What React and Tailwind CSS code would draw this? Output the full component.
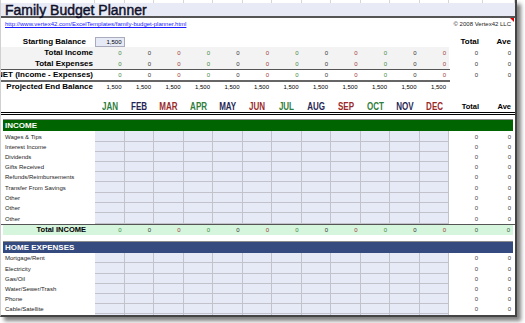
import React from 'react';

const COLS = 'grid grid-cols-[94px_repeat(12,minmax(0,1fr))_34px_32px]';
const MONTHS = ['JAN', 'FEB', 'MAR', 'APR', 'MAY', 'JUN', 'JUL', 'AUG', 'SEP', 'OCT', 'NOV', 'DEC'];
const monthTone = ['text-[#2f7d3c]', 'text-[#1f2755]', 'text-[#9a2a2a]'];
const zeroTone = ['text-[#3f8a3f]', 'text-[#333333]', 'text-[#a03a3a]'];

const INCOME = [
  ['Wages & Tips', 11],
  ['Interest Income', 10],
  ['Dividends', 10],
  ['Gifts Received', 10],
  ['Refunds/Reimbursements', 10],
  ['Transfer From Savings', 11],
  ['Other', 10],
  ['Other', 10],
  ['Other', 11],
];

const HOME = [
  ['Mortgage/Rent', 10],
  ['Electricity', 11],
  ['Gas/Oil', 10],
  ['Water/Sewer/Trash', 10],
  ['Phone', 10],
  ['Cable/Satellite', 10],
  ['Internet', 10],
];

const rowH = { 10: 'h-[10px]', 11: 'h-[11px]' };

const Val = ({ children, className = '' }) => (
  <div className={`flex items-center justify-end pr-[3px] text-[6px] leading-none ${className}`}>{children}</div>
);

const SummaryRow = ({ label, h, bg, values, total = true }) => (
  <div className={`${COLS} ${h}`}>
    <div className={`flex items-center justify-end whitespace-nowrap pr-[2px] text-[8px] font-bold leading-none text-black ${bg}`}>
      {label}
    </div>
    {MONTHS.map((m, i) => (
      <Val key={m} className={`${bg} ${values === 'bal' ? 'text-black' : zeroTone[i % 3]}`}>
        {values === 'bal' ? '1,500' : '0'}
      </Val>
    ))}
    {total ? (
      <>
        <Val className="pr-[5px] text-[#333]">0</Val>
        <Val className="pr-[4px] text-[#333]">0</Val>
      </>
    ) : (
      <>
        <div />
        <div />
      </>
    )}
  </div>
);

const InputRow = ({ label, h }) => (
  <div className={`${COLS} ${rowH[h]}`}>
    <div className="flex items-center whitespace-nowrap pl-[4px] text-[6px] leading-none text-[#222]">{label}</div>
    {MONTHS.map((m) => (
      <div key={m} className="border-r border-b border-[#c2c2ca] bg-[#e6e9f6]" />
    ))}
    <Val className="pr-[5px] text-[#444]">0</Val>
    <Val className="pr-[4px] text-[#444]">0</Val>
  </div>
);

const Band = ({ label, color }) => (
  <div className={`mx-[2px] flex h-[12px] items-center border-t border-[#8c8c8c] ${color} pl-[2px] text-[8px] font-bold leading-none text-white`}>
    {label}
  </div>
);

export default function App() {
  return (
    <div className="h-[323px] w-[525px] overflow-hidden bg-white font-['Liberation_Sans',Arial,sans-serif]">
      <div className="h-[317px] w-[517px] overflow-hidden border-r-2 border-b-2 border-[#444] border-l border-l-[#d0d0d0] bg-white shadow-[4px_4px_4px_rgba(0,0,0,0.5)]">
        <div className={`${COLS} h-[3px]`}>
          {Array.from({ length: 15 }).map((_, i) => (
            <div key={i} className="border-r border-[#d6d6d6]" />
          ))}
        </div>

        <div className="flex h-[15px] items-center border-b-2 border-[#555] bg-[#e8ebf5] pl-[4px] text-[14px] leading-none text-[#10102a] [-webkit-text-stroke:0.45px_#10102a]">
          Family Budget Planner
        </div>

        <div className="relative flex h-[12px] items-center justify-between pl-[4px] pr-[4px]">
          <span className="text-[6px] leading-none text-[#1a1aff] underline">
            http://www.vertex42.com/ExcelTemplates/family-budget-planner.html
          </span>
          <span className="text-[6px] leading-none text-[#222]">© 2008 Vertex42 LLC</span>
          <span className="absolute right-[1px] top-0 h-0 w-0 border-l-[4px] border-t-[4px] border-l-transparent border-t-[#e00000]" />
        </div>

        <div className="h-[7px]" />

        <div className={`${COLS} h-[10px]`}>
          <div className="flex items-center justify-end pr-[9px] text-[8px] font-bold leading-none text-black">Starting Balance</div>
          <div className="flex items-center justify-end border border-[#a9abbd] bg-[#e6e9f6] pr-[2px] text-[6px] leading-none text-black">
            1,500
          </div>
          {MONTHS.slice(1).map((m) => (
            <div key={m} />
          ))}
          <div className="flex items-center justify-end pr-[4px] text-[8px] font-bold leading-none text-black">Total</div>
          <div className="flex items-center justify-end pr-[4px] text-[8px] font-bold leading-none text-black">Ave</div>
        </div>

        <SummaryRow label="Total Income" h="h-[11px]" bg="bg-[#f3f3f3]" />
        <SummaryRow label="Total Expenses" h="h-[11px]" bg="bg-[#f3f3f3]" />
        <div className="h-[1px] w-[449px] bg-[#555]" />
        <SummaryRow label="NET (Income - Expenses)" h="h-[10px]" bg="" />
        <div className="h-[2px] w-[449px] bg-[#666]" />
        <SummaryRow label="Projected End Balance" h="h-[10px]" bg="" values="bal" total={false} />

        <div className="h-[9px]" />

        <div className={`${COLS} h-[11px]`}>
          <div />
          {MONTHS.map((m, i) => (
            <div key={m} className={`flex items-center justify-center text-[10px] font-bold leading-none ${monthTone[i % 3]}`}>
              <span className="inline-block scale-x-[0.8]">{m}</span>
            </div>
          ))}
          <div className="flex items-center justify-end pr-[4px] text-[7.5px] font-bold leading-none text-black">Total</div>
          <div className="flex items-center justify-end pr-[4px] text-[7.5px] font-bold leading-none text-black">Ave</div>
        </div>

        <div className="h-[3px] border-t border-b border-black" />
        <div className="h-[4px]" />

        <Band label="INCOME" color="bg-[#006400]" />
        {INCOME.map(([label, h], i) => (
          <InputRow key={i} label={label} h={h} />
        ))}

        <div className={`${COLS} h-[11px] border-t border-[#555]`}>
          <div className="ml-[2px] flex items-center justify-end bg-[#d5f5dc] pr-[9px] text-[7.5px] font-bold leading-none text-black">
            Total INCOME
          </div>
          {MONTHS.map((m, i) => (
            <Val key={m} className={`bg-[#d5f5dc] ${zeroTone[i % 3]}`}>0</Val>
          ))}
          <Val className="bg-[#d5f5dc] pr-[5px] text-[#3a5a3a]">0</Val>
          <Val className="mr-[2px] bg-[#d5f5dc] pr-[2px] text-[#3a5a3a]">0</Val>
        </div>

        <div className="h-[6px]" />

        <Band label="HOME EXPENSES" color="bg-[#354a7e]" />
        {HOME.map(([label, h], i) => (
          <InputRow key={i} label={label} h={h} />
        ))}
      </div>
    </div>
  );
}
